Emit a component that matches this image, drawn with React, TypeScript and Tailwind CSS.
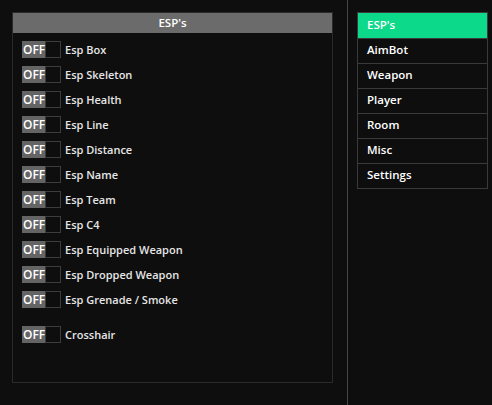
const ESP_ITEMS = [
  "Esp Box",
  "Esp Skeleton",
  "Esp Health",
  "Esp Line",
  "Esp Distance",
  "Esp Name",
  "Esp Team",
  "Esp C4",
  "Esp Equipped Weapon",
  "Esp Dropped Weapon",
  "Esp Grenade / Smoke",
];

const MENU = ["ESP's", "AimBot", "Weapon", "Player", "Room", "Misc", "Settings"];

function Toggle({ label }: { label: string }) {
  return (
    <div className="flex items-center h-[25px]">
      <div className="flex h-[17px] w-[39px]">
        <div className="w-[23px] h-full bg-[#646464] text-white text-[12px] leading-[17px] pl-[1px]">OFF</div>
        <div className="flex-1 h-full border border-[#3c3c3c]" />
      </div>
      <span className="ml-[4px] pt-[2px] text-[#e6e6e6] text-[11px]">{label}</span>
    </div>
  );
}

export default function App() {
  return (
    <div
      className="w-[492px] h-[405px] bg-[#0e0e0e] flex font-semibold"
      style={{ fontFamily: '"Open Sans", "Noto Sans", sans-serif' }}
    >
      {/* ESP panel */}
      <div className="ml-[12px] mt-[12px] w-[321px] h-[371px] border border-[#2a2a2a] flex flex-col">
        <div className="h-[20px] bg-[#6b6b6b] text-white text-[11.5px] flex items-center justify-center">
          ESP's
        </div>
        <div className="pl-[9px] pt-[4px] flex flex-col">
          {ESP_ITEMS.map((item) => (
            <Toggle key={item} label={item} />
          ))}
          <div className="mt-[10px]">
            <Toggle label="Crosshair" />
          </div>
        </div>
      </div>

      {/* divider */}
      <div className="ml-[14px] w-px h-full bg-[#444444]" />

      {/* Menu */}
      <div className="ml-[9px] mt-[12px] w-[131px] h-fit border border-[#3a3a3a] flex flex-col">
        {MENU.map((m, i) => (
          <div
            key={m}
            className={`h-[25px] pl-[9px] pb-[2px] flex items-center text-[11.5px] text-white ${
              i === 0 ? "bg-[#0dd98a] h-[24px]" : "border-t border-[#3a3a3a]"
            }`}
          >
            {m}
          </div>
        ))}
      </div>
    </div>
  );
}
